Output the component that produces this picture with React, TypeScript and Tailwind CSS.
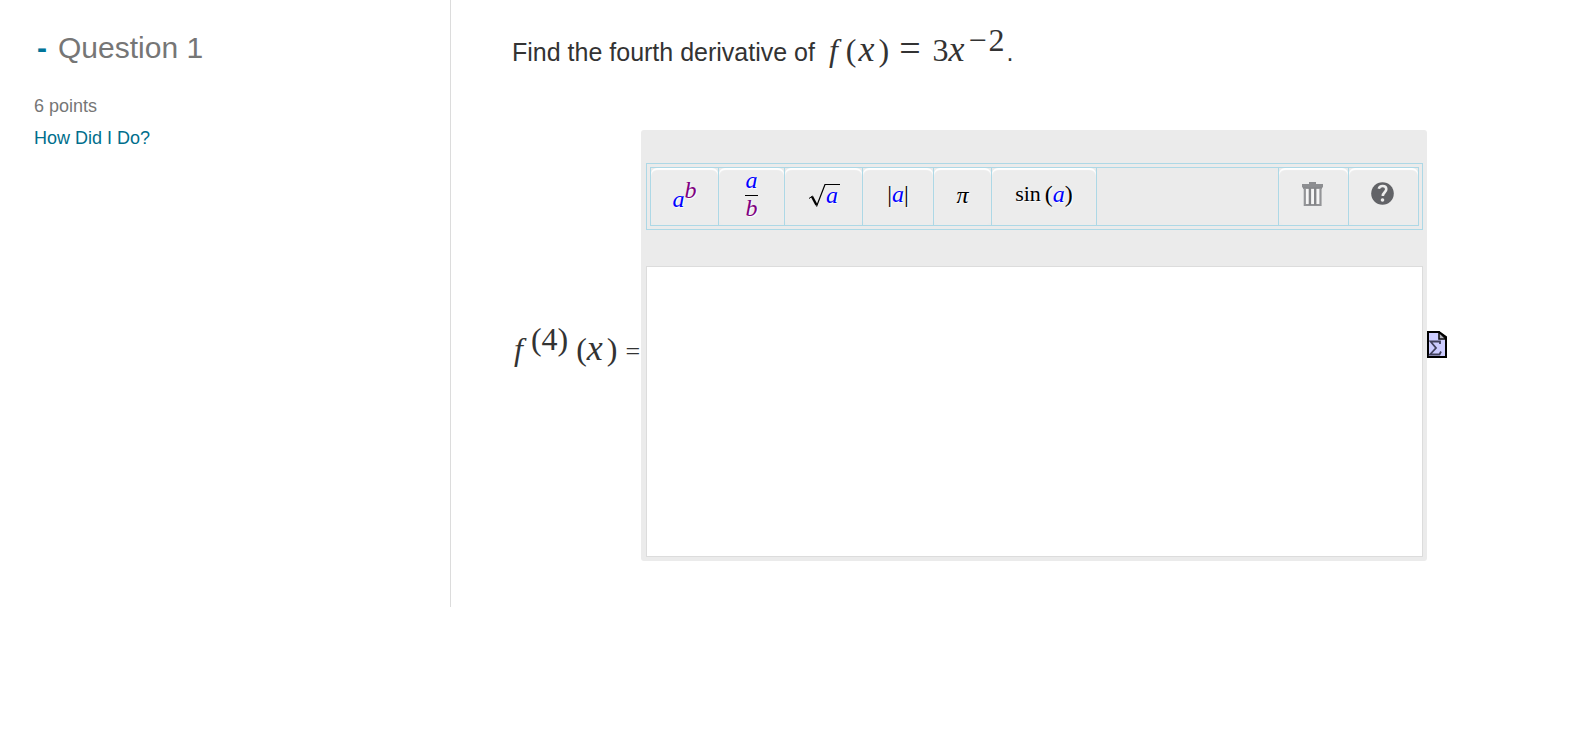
import { useState } from "react";
import type { ReactNode } from "react";

interface ToolButtonProps {
  label: string;
  className: string;
  onClick: () => void;
  children: ReactNode;
}

function ToolButton({ label, className, onClick, children }: ToolButtonProps) {
  return (
    <div className={`shrink-0 border-[#add8e6] ${className}`}>
      <button
        type="button"
        aria-label={label}
        title={label}
        onClick={onClick}
        className="flex h-full w-full items-center justify-center rounded-md bg-[#ececec] pb-[6px] font-['Liberation_Serif',serif] text-2xl leading-6 text-black shadow-[inset_0_2px_1px_#fff] [text-shadow:1px_1px_1px_#fff]"
      >
        {children}
      </button>
    </div>
  );
}

function VarA() {
  return <i className="text-[#0000ff]">a</i>;
}

function VarB() {
  return <i className="text-[#800080]">b</i>;
}

function TrashIcon() {
  return (
    <svg width="24" height="24" viewBox="0 0 24 24" fill="none" aria-hidden="true">
      <path d="M2.500 6h17v17h-17z" fill="#f6f6f6" />
      <path d="M7 0h7v2h7v3.500H0V2h7z" fill="#8d8e91" />
      <path d="M1 6h19" stroke="#77787b" strokeWidth="1.500" />
      <path d="M2.800 6v17h15.700V6" stroke="#939497" strokeWidth="2.200" />
      <path d="M7.900 6v17M13.200 6v17" stroke="#848588" strokeWidth="2.400" />
    </svg>
  );
}

function HelpIcon() {
  return (
    <svg width="25" height="24" viewBox="0 0 25 24" fill="none" aria-hidden="true">
      <circle cx="11.500" cy="11.500" r="11.300" fill="#626367" />
      <path d="M7.800 6.800C8.500 3.200 15 3 15.300 7c.2 3.200-3.500 3.300-3.500 7" stroke="#ededed" strokeWidth="2.600" />
      <circle cx="11.500" cy="18" r="1.800" fill="#ededed" />
    </svg>
  );
}

function EquationIcon() {
  return (
    <svg width="20" height="27" viewBox="0 0 20 27" fill="none" aria-hidden="true">
      <path d="M1 1h11l7 7v18H1z" fill="#ccccff" />
      <path d="M12 1v7h7z" fill="#b4b4c0" stroke="#111" strokeWidth="1.600" />
      <path d="M1 1h11l7 5v20H1z" stroke="#000" strokeWidth="2" />
      <path d="M13 13v-2.500H3.500l5.500 6.500-6 6.500h9.500l1.500-3" stroke="#40405c" strokeWidth="1.800" />
    </svg>
  );
}

export default function App() {
  const [answer, setAnswer] = useState("");
  const [showHelp, setShowHelp] = useState(false);
  const [open, setOpen] = useState(true);
  const [showEditor, setShowEditor] = useState(true);

  const insert = (value: string) => setAnswer((prev) => prev + value);

  return (
    <div className="min-h-screen bg-white font-['Liberation_Sans',Arial,sans-serif] text-[#333]">
      <div className="flex">
        <aside className="w-[451px] shrink-0 border-r border-[#dcdcdc] pl-[34px] pt-[30px] text-lg text-[#767676]">
          <h2 className="flex items-center text-3xl leading-9">
            <button
              type="button"
              aria-label="Toggle question"
              onClick={() => setOpen(!open)}
              className="w-6 pl-[3px] text-left font-bold text-[#007499]"
            >
              {open ? "-" : "+"}
            </button>
            Question 1
          </h2>
          <p className="mt-6 leading-8">6 points</p>
          <a href="#feedback" className="block leading-8 text-[#006e8c]">
            How Did I Do?
          </a>
        </aside>

        <main className="min-w-0 flex-1 pb-[46px] pl-[61px] pr-[149px]">
          {open && (
            <>
              <div className="flex h-[130px] items-baseline whitespace-nowrap pt-[30px] text-[25px] leading-9">
                <span>Find the fourth derivative of</span>
                <span className="ml-3 flex items-baseline font-['Liberation_Serif',serif] text-[32px] leading-9">
                  <i className="ml-[2px]">f</i>
                  <span className="ml-2">(</span>
                  <i className="ml-[2px] text-4xl leading-9">x</i>
                  <span className="ml-1">)</span>
                  <span className="ml-[10px] text-[38px] leading-9">=</span>
                  <span className="ml-3">3</span>
                  <i className="text-4xl leading-9">x</i>
                  <sup className="relative top-[-10px] ml-1 flex gap-[2px] align-baseline text-[32px] leading-9">
                    <span>−</span>
                    <span>2</span>
                  </sup>
                </span>
                <span className="ml-[2px]">.</span>
              </div>

              <div className="flex items-center">
                <label
                  htmlFor="answer"
                  className="flex w-[129px] shrink-0 items-baseline whitespace-nowrap pt-2 font-['Liberation_Serif',serif] text-[32px] leading-10"
                >
                  <i className="pl-[2px]">f</i>
                  <sup className="relative top-[-10px] ml-2 align-baseline text-[32px] leading-10">(4)</sup>
                  <span className="ml-2">(</span>
                  <i className="text-4xl leading-10">x</i>
                  <span className="ml-1">)</span>
                  <span className="ml-2 text-[26px]">=</span>
                </label>

                {showEditor && (
                  <div className="min-w-0 flex-1 rounded-[3px] bg-[#ebebeb] pb-1 pl-[5px] pr-1 pt-[33px]">
                    <div className="border border-[#add8e6] p-[3px]">
                      <div role="toolbar" aria-label="Math input" className="flex h-[59px] border border-[#add8e6]">
                        <ToolButton label="Exponent" className="w-[68px] border-r" onClick={() => insert("^")}>
                          <span className="flex items-end pt-[2px]">
                            <VarA />
                            <span className="mb-[9px]">
                              <VarB />
                            </span>
                          </span>
                        </ToolButton>
                        <ToolButton label="Fraction" className="w-[66px] border-r" onClick={() => insert("/")}>
                          <span className="flex flex-col items-center">
                            <VarA />
                            <span className="mt-[3px] h-px w-[13px] bg-black" />
                            <VarB />
                          </span>
                        </ToolButton>
                        <ToolButton label="Square root" className="w-[78px] border-r" onClick={() => insert("sqrt()")}>
                          <span className="flex items-start pl-[2px] pt-1">
                            <svg width="17" height="23" viewBox="0 0 17 23" fill="none" stroke="#000" aria-hidden="true">
                              <path d="M0 14.500l3.500-2.500" />
                              <path d="M3 12.500l4.500 8.500" strokeWidth="2.400" />
                              <path d="M7.500 22.500L16 .500h1" strokeWidth="1.200" />
                            </svg>
                            <span className="h-6 border-t border-black pr-[2px] leading-5">
                              <VarA />
                            </span>
                          </span>
                        </ToolButton>
                        <ToolButton label="Absolute value" className="w-[71px] border-r" onClick={() => insert("abs()")}>
                          <span>|</span>
                          <VarA />
                          <span>|</span>
                        </ToolButton>
                        <ToolButton label="Pi" className="w-[58px] border-r" onClick={() => insert("pi")}>
                          <i className="pt-[2px]">π</i>
                        </ToolButton>
                        <ToolButton label="Sine" className="w-[105px] border-r" onClick={() => insert("sin()")}>
                          <span className="mr-1 text-[22px]">sin</span>
                          <span>(</span>
                          <VarA />
                          <span>)</span>
                        </ToolButton>
                        <div className="flex-1" />
                        <ToolButton label="Clear" className="w-[70px] border-l" onClick={() => setAnswer("")}>
                          <TrashIcon />
                        </ToolButton>
                        <ToolButton label="Help" className="w-[70px] border-l" onClick={() => setShowHelp(!showHelp)}>
                          <HelpIcon />
                        </ToolButton>
                      </div>
                    </div>
                    {showHelp && <p className="pt-2 text-sm">Type your answer in the box below.</p>}
                    <textarea
                      id="answer"
                      value={answer}
                      onChange={(e) => setAnswer(e.target.value)}
                      className="mt-[36px] block h-[291px] w-full resize-none border border-[#dcdcdc] bg-white p-2 text-xl outline-none"
                    />
                  </div>
                )}

                <button
                  type="button"
                  aria-label="Equation editor"
                  onClick={() => setShowEditor(!showEditor)}
                  className="shrink-0 pb-[2px]"
                >
                  <EquationIcon />
                </button>
              </div>
            </>
          )}
        </main>
      </div>
    </div>
  );
}
